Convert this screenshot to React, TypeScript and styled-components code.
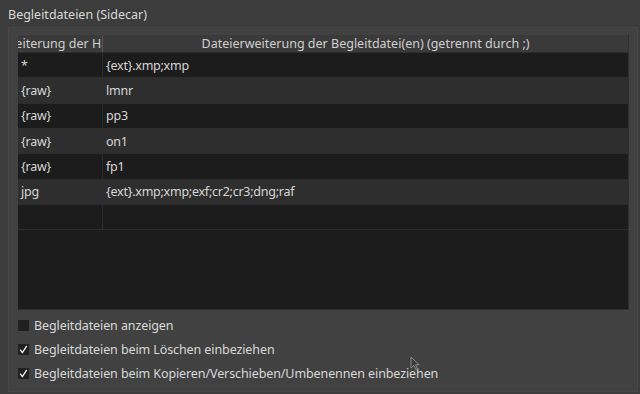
import React from "react";
import styled, { createGlobalStyle } from "styled-components";

const Global = createGlobalStyle`
  html, body { margin: 0; padding: 0; background: #3c3c3c; }
  body { width: 640px; height: 394px; overflow: hidden; font-family: "Noto Sans", "Open Sans", sans-serif; font-size: 12.5px; color: #d8d8d8; }
  * { box-sizing: border-box; }
`;

const Page = styled.div`
  position: relative;
  width: 640px;
  height: 394px;
  display: flex;
  flex-direction: column;
  padding-left: 8px;
`;

const Title = styled.div`
  height: 27px;
  line-height: 27px;
  padding-top: 1px;
  color: #d8d8d8;
  white-space: nowrap;
`;

const Group = styled.div`
  width: 630px;
  height: 365px;
  border: 1px solid #464646;
  background: #414141;
  padding: 7px 8px 0 9px;
  display: flex;
  flex-direction: column;
`;

const Table = styled.div`
  width: 611px;
  height: 275px;
  display: flex;
  flex-direction: column;
  background: #1c1c1c;
  border-right: 1px solid #2e2e2e;
  border-bottom: 1px solid #2e2e2e;
  overflow: hidden;
`;

const Cols = "85px 1fr";

const Header = styled.div`
  display: grid;
  grid-template-columns: ${Cols};
  height: 18px;
  background: #3a3a3a;
  border-bottom: 1px solid #2c2c2c;
`;

const HeadCell = styled.div<{ $first?: boolean }>`
  display: flex;
  justify-content: center;
  align-items: center;
  overflow: hidden;
  white-space: nowrap;
  color: #cfcfcf;
  line-height: 17px;
  border-right: ${(p) => (p.$first ? "1px solid #555" : "none")};
`;

const Row = styled.div<{ $alt?: boolean }>`
  display: grid;
  grid-template-columns: ${Cols};
  height: 25.33px;
  background: ${(p) => (p.$alt ? "#2e2e2e" : "#1c1c1c")};
  border-bottom: 1px solid #2c2c2c;
`;

const Cell = styled.div<{ $first?: boolean }>`
  display: flex;
  align-items: center;
  padding-left: 3px;
  white-space: nowrap;
  overflow: hidden;
  color: #d6d6d6;
  font-size: 12.5px;
  letter-spacing: -0.25px;
  border-right: ${(p) => (p.$first ? "1px solid #2c2c2c" : "none")};
`;

const Options = styled.div`
  display: flex;
  flex-direction: column;
  padding-top: 3px;
`;

const Option = styled.label`
  display: flex;
  align-items: center;
  height: 24px;
  gap: 5px;
  color: #d8d8d8;
  white-space: nowrap;
  letter-spacing: -0.1px;
`;

const Box = styled.span`
  width: 11px;
  height: 11px;
  background: #202020;
  display: flex;
  align-items: center;
  justify-content: center;
  margin-top: 1px;
`;

const Cursor = styled.svg`
  position: absolute;
  left: 410px;
  top: 356px;
`;

const rows: [string, string][] = [
  ["*", "{ext}.xmp;xmp"],
  ["{raw}", "lmnr"],
  ["{raw}", "pp3"],
  ["{raw}", "on1"],
  ["{raw}", "fp1"],
  ["jpg", "{ext}.xmp;xmp;exf;cr2;cr3;dng;raf"],
  ["", ""],
];

const options: [string, boolean][] = [
  ["Begleitdateien anzeigen", false],
  ["Begleitdateien beim Löschen einbeziehen", true],
  ["Begleitdateien beim Kopieren/Verschieben/Umbenennen einbeziehen", true],
];

const Check = () => (
  <svg width="9" height="9" viewBox="0 0 9 9">
    <path d="M1.2 4.6 L3.4 7.6 L7.8 0.8" fill="none" stroke="#f0f0f0" strokeWidth="1.3" />
  </svg>
);

export default function App() {
  return (
    <Page>
      <Global />
      <Title>Begleitdateien (Sidecar)</Title>
      <Group>
        <Table>
          <Header>
            <HeadCell $first>Dateierweiterung der Hauptdatei</HeadCell>
            <HeadCell>Dateierweiterung der Begleitdatei(en) (getrennt durch ;)</HeadCell>
          </Header>
          {rows.map(([a, b], i) => (
            <Row key={i} $alt={i % 2 === 1}>
              <Cell $first>{a}</Cell>
              <Cell>{b}</Cell>
            </Row>
          ))}
        </Table>
        <Options>
          {options.map(([t, c]) => (
            <Option key={t}>
              <Box>{c && <Check />}</Box>
              {t}
            </Option>
          ))}
        </Options>
      </Group>
      <Cursor width="12" height="16" viewBox="0 0 12 16">
        <path d="M1 1 L1 12 L3.8 9.4 L6 14 L7.6 13.3 L5.5 8.8 L9.2 8.8 Z" fill="#3c3c3c" stroke="#8a8a8a" strokeWidth="1" />
      </Cursor>
    </Page>
  );
}
